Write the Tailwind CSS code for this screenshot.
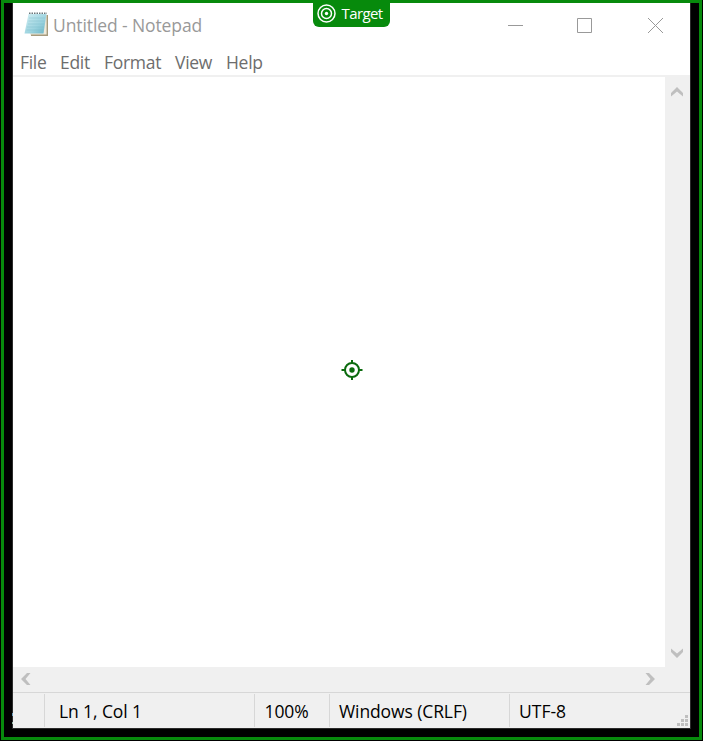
<!DOCTYPE html>
<html lang="en">
<head>
<meta charset="utf-8">
<title>Untitled - Notepad</title>
<script src="https://cdn.jsdelivr.net/npm/@tailwindcss/browser@4"></script>
</head>
<body class="bg-black">
<div class="relative w-[703px] h-[741px] overflow-hidden bg-black pl-px pr-px pb-px font-['Open_Sans','Noto_Sans',sans-serif]">
  <div class="h-full border-[3px] border-[#078a0c] pl-2 pr-[8px] pb-2">
    <div class="flex h-[726px] w-[679px] flex-col border-x border-b border-[#2b2b2b] bg-white">
      <header class="flex h-[45px] shrink-0 items-center text-[#999]">
        <svg class="ml-[11px] mt-[-3px] size-[26px] shrink-0" viewBox="0 0 26 26">
          <defs><linearGradient id="page" x1="0" y1="0" x2="1" y2="1"><stop offset="0" stop-color="#d4eff4"/><stop offset=".6" stop-color="#9bd3df"/><stop offset="1" stop-color="#69b4c6"/></linearGradient></defs>
          <path d="M6 4H24V25H7Z" fill="#a59a7c"/>
          <path d="M6 4H22.6V23.5H6Z" fill="#eee9d9"/>
          <path d="M4.500 3H22.500L19.500 22.500H.5Z" fill="url(#page)"/>
          <path d="M5 7H21M4.500 10H20.500M4 13H20M3 16H20M2.500 19H19" stroke="#77b9c7" stroke-width=".6" opacity=".6"/>
          <path d="M5 2.200H23" stroke="#6b777b" stroke-width="1.600" stroke-dasharray="1.500 1"/>
        </svg>
        <h1 class="ml-[3px] mt-[-2px] w-[300px] whitespace-nowrap text-[17.500px] leading-6 tracking-[-0.1px]">Untitled - Notepad</h1>
        <svg class="ml-auto mr-[26px] mt-[-2px] h-4 w-[157px] shrink-0" viewBox="0 0 157 16" fill="none" stroke="#999">
          <path d="M1 8.500H16M70.500 1.500h14v14h-14zM141 1l15 15M156 1l-15 15"/>
        </svg>
      </header>
      <nav class="flex h-[27px] shrink-0 items-center pl-[7px] text-[17.500px] leading-6 tracking-[-0.3px] text-[#6d6d6d]">
        <span class="w-10">File</span><span class="w-11">Edit</span><span class="w-[71px]">Format</span><span class="w-[51px]">View</span><span>Help</span>
      </nav>
      <div class="h-[2px] shrink-0 bg-[#f0f0f0]"></div>
      <main class="flex h-[590px] shrink-0">
        <div class="flex w-[652px] items-center justify-center pl-[25px]">
          <svg class="mb-[4px] size-[22px]" viewBox="0 0 22 22" fill="none" stroke="#0b6b0e" stroke-width="2">
            <circle cx="11" cy="11" r="7"/><circle cx="11" cy="11" r="2.700" fill="#0b6b0e" stroke="none"/>
            <path d="M11 1V4M11 18V21M.5 11H4M18 11h3.500"/>
          </svg>
        </div>
        <div class="flex w-[25px] flex-col items-center justify-between bg-[#f0f0f0] pb-[8px] pr-px pt-[9px]">
          <svg class="h-[11px] w-3" viewBox="0 0 12 11"><path d="M0 7 6 1l6 6v3.500L6 5.500 0 10.500Z" fill="#bfbfbf"/></svg>
          <svg class="h-[11px] w-3" viewBox="0 0 12 11"><path d="M0 .5 6 5.500l6-5v3.500L6 10 0 4Z" fill="#bfbfbf"/></svg>
        </div>
      </main>
      <div class="flex h-[25px] shrink-0 items-center justify-between bg-[#f0f0f0] pb-px pl-2 pr-[35px]">
        <svg class="h-3 w-[10px]" viewBox="0 0 10 12"><path d="M6 0H9.500L4.500 6l5 6H6L0 6Z" fill="#bfbfbf"/></svg>
        <svg class="h-3 w-[10px]" viewBox="0 0 10 12"><path d="M.5 0H4L10 6 4 12H.5L5.500 6Z" fill="#bfbfbf"/></svg>
      </div>
      <footer class="flex h-9 shrink-0 border-t border-[#d7d7d7] bg-[#f0f0f0] pb-[1px] pt-[1px] text-[17.500px] leading-[35px] tracking-[-0.1px] text-black">
        <div class="w-8 border-r border-[#d7d7d7]"></div>
        <div class="w-[210px] border-r border-[#d7d7d7] pl-[14px]"><span>Ln 1, Col 1</span></div>
        <div class="w-[75px] border-r border-[#d7d7d7] pl-[9.500px]"><span>100%</span></div>
        <div class="w-[180px] border-r border-[#d7d7d7] pl-[9px]"><span>Windows (CRLF)</span></div>
        <div class="pl-[9px] tracking-normal"><span>UTF-8</span></div>
        <svg class="ml-auto mr-[2px] mt-[21px] size-[11px]" viewBox="0 0 11 11" fill="#bfbfbf"><path d="M8 0h3v3H8zM4 4h3v3H4zM8 4h3v3H8zM0 8h3v3H0zM4 8h3v3H4zM8 8h3v3H8z"/></svg>
      </footer>
    </div>
  </div>
  <div class="absolute left-[313px] top-0 flex h-[27px] w-[77px] items-center rounded-b-[6px] bg-[#078a0c] pl-1 text-[15px] text-white">
    <svg class="size-[19px] shrink-0" viewBox="0 0 19 19" fill="none" stroke="#fff" stroke-width="1.500"><circle cx="9.500" cy="9.500" r="8.500"/><circle cx="9.500" cy="9.500" r="5"/><circle cx="9.500" cy="9.500" r="1.700" fill="#fff" stroke="none"/></svg>
    <span class="ml-[5.500px] mt-[-1px] leading-5 tracking-[-0.6px]">Target</span>
  </div>
  <div class="absolute left-[12px] top-[713px] h-[3px] w-px bg-[#6f9fc0]"></div>
  <div class="absolute left-[12px] top-[722px] h-[2px] w-px bg-[#9cbcae]"></div>
</div>
</body>
</html>
